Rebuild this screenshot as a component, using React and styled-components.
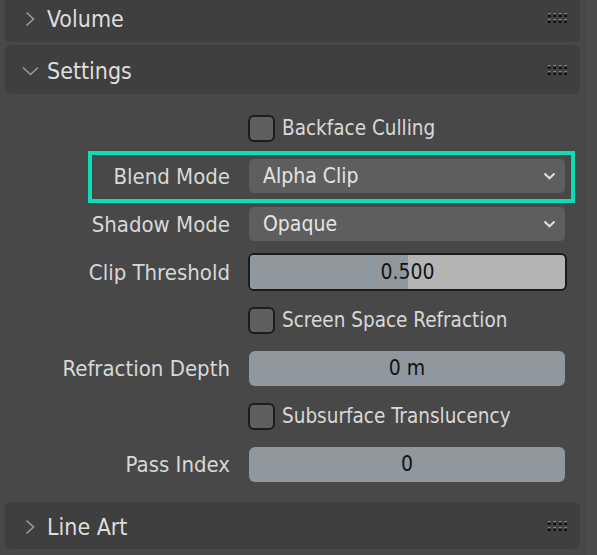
import React from "react";
import styled, { createGlobalStyle } from "styled-components";

const GlobalStyle = createGlobalStyle`
  html, body {
    margin: 0;
    padding: 0;
    background: #484848;
    overflow: hidden;
  }
  body {
    font-family: "DejaVu Sans Condensed", "DejaVu Sans", sans-serif;
    font-stretch: semi-condensed;
  }
`;

const Page = styled.div`
  display: flex;
  width: 597px;
  height: 555px;
  overflow: hidden;
  background: #484848;
`;

const Main = styled.div`
  width: 585px;
  display: flex;
  flex-direction: column;
`;

const ScrollStrip = styled.div`
  flex: 1;
  background: #4b4b4b;
  border-left: 1px solid #444;
`;

const Header = styled.div`
  display: flex;
  align-items: center;
  height: ${(p) => p.h}px;
  margin: ${(p) => p.mt || 0}px 5px 0 5px;
  padding: 2px 12px 0 15px;
  box-sizing: border-box;
  background: #3f3f3f;
  border-radius: 6px;
  color: #dedede;
  font-size: 23px;
`;

const Caret = styled.span`
  width: 20px;
  display: flex;
  justify-content: center;
  margin-right: 7px;
`;

const Title = styled.span`
  flex: 1;
`;

const Body = styled.div`
  padding: 10px 0 14px 0;
`;

const Row = styled.div`
  position: relative;
  display: grid;
  grid-template-columns: 230px 1fr;
  column-gap: 19px;
  align-items: center;
  height: 48px;
  padding-right: 20px;
`;

const Label = styled.span`
  text-align: right;
  color: #d8d8d8;
  font-size: 22px;
  white-space: nowrap;
`;

const Highlight = styled.div`
  position: absolute;
  left: 88px;
  right: 10px;
  top: -1px;
  bottom: -3px;
  border: 4px solid #0ddcb4;
  pointer-events: none;
`;

const Dropdown = styled.div`
  display: flex;
  align-items: center;
  height: 34px;
  padding: 0 9px 0 14px;
  background: #5e5e5e;
  border-radius: 5px;
  color: #e4e4e4;
  font-size: 21px;
`;

const Value = styled.span`
  flex: 1;
`;

const NumField = styled.div`
  position: relative;
  display: flex;
  align-items: center;
  justify-content: center;
  height: ${(p) => (p.active ? 34 : 35)}px;
  background: ${(p) => (p.active ? "#b4b4b4" : "#8f979f")};
  border-radius: 6px;
  border: ${(p) => (p.active ? "2px solid #1b1b1b" : "none")};
  margin: ${(p) => (p.active ? "0 -2px 0 -1px" : "0")};
  overflow: hidden;
  color: #141414;
  font-size: 21px;
`;

const Fill = styled.div`
  position: absolute;
  left: 0;
  top: 0;
  bottom: 0;
  background: #8f979f;
`;

const NumText = styled.span`
  position: relative;
`;

const CheckWrap = styled.label`
  display: flex;
  align-items: center;
  gap: 7px;
  margin-left: -1px;
  color: #d8d8d8;
  font-size: 20.5px;
`;

const Box = styled.span`
  width: 23px;
  height: 23px;
  border: 2px solid #1c1c1c;
  border-radius: 6px;
  background: #5f5f5f;
`;

function ChevronRight() {
  return (
    <svg width="10" height="16" viewBox="0 0 10 16">
      <path d="M1.5 1.5 L8.5 8 L1.5 14.5" fill="none" stroke="#9a9a9a" strokeWidth="1.6" />
    </svg>
  );
}

function ChevronDown() {
  return (
    <svg width="17" height="10" viewBox="0 0 17 10">
      <path d="M1 1.5 L8.5 8.5 L16 1.5" fill="none" stroke="#9a9a9a" strokeWidth="1.6" />
    </svg>
  );
}

function SmallChevron() {
  return (
    <svg width="13" height="8" viewBox="0 0 13 8">
      <path d="M1.5 1.5 L6.5 6.3 L11.5 1.5" fill="none" stroke="#e0e0e0" strokeWidth="2" />
    </svg>
  );
}

function Grip() {
  const cols = [0, 5.5, 11, 16.5];
  return (
    <svg width="20" height="11" viewBox="0 0 20 11">
      {cols.map((x) =>
        [0, 6].map((y) => (
          <g key={`${x}-${y}`}>
            <rect x={x} y={y} width="2.5" height="1.5" fill="#8a8a8a" />
            <rect x={x} y={y + 1.5} width="2.5" height="2.5" fill="#0c0c0c" />
          </g>
        ))
      )}
    </svg>
  );
}

function PanelHeader({ title, open, h, mt }) {
  return (
    <Header h={h} mt={mt}>
      <Caret>{open ? <ChevronDown /> : <ChevronRight />}</Caret>
      <Title>{title}</Title>
      <Grip />
    </Header>
  );
}

function Checkbox({ text }) {
  return (
    <Row>
      <span />
      <CheckWrap>
        <Box />
        {text}
      </CheckWrap>
    </Row>
  );
}

export default function App() {
  const clip = 0.5;
  return (
    <Page>
      <GlobalStyle />
      <Main>
        <PanelHeader title="Volume" h={49} mt={-7} />
        <PanelHeader title="Settings" open h={49} mt={3} />
        <Body>
          <Checkbox text="Backface Culling" />
          <Row>
            <Highlight />
            <Label>Blend Mode</Label>
            <Dropdown>
              <Value>Alpha Clip</Value>
              <SmallChevron />
            </Dropdown>
          </Row>
          <Row>
            <Label>Shadow Mode</Label>
            <Dropdown>
              <Value>Opaque</Value>
              <SmallChevron />
            </Dropdown>
          </Row>
          <Row>
            <Label>Clip Threshold</Label>
            <NumField active>
              <Fill style={{ width: `${clip * 100}%` }} />
              <NumText>{clip.toFixed(3)}</NumText>
            </NumField>
          </Row>
          <Checkbox text="Screen Space Refraction" />
          <Row>
            <Label>Refraction Depth</Label>
            <NumField>0 m</NumField>
          </Row>
          <Checkbox text="Subsurface Translucency" />
          <Row>
            <Label>Pass Index</Label>
            <NumField>0</NumField>
          </Row>
        </Body>
        <PanelHeader title="Line Art" h={47} />
      </Main>
      <ScrollStrip />
    </Page>
  );
}
